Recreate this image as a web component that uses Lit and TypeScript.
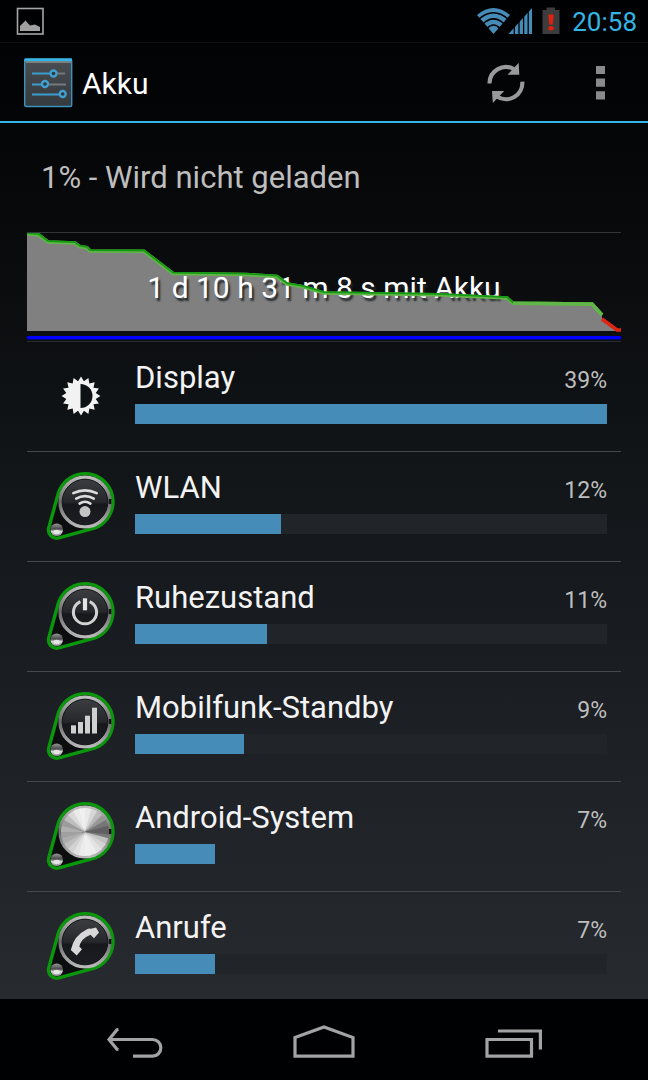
import { LitElement, html, svg, css } from "lit";
import { customElement } from "lit/decorators.js";

interface Consumer {
  name: string;
  percent: number;
  level: number;
  icon: string;
}

const CONSUMERS: Consumer[] = [
  { name: "Display", percent: 39, level: 100, icon: "display" },
  { name: "WLAN", percent: 12, level: 31, icon: "wifi" },
  { name: "Ruhezustand", percent: 11, level: 28, icon: "power" },
  { name: "Mobilfunk-Standby", percent: 9, level: 23, icon: "signal" },
  { name: "Android-System", percent: 7, level: 17, icon: "system" },
  { name: "Anrufe", percent: 7, level: 17, icon: "phone" },
];

const CHARGE =
  "0,2 12,3 21,10 48,11 53,14.7 60,15.7 63,19 117,19.3 146,41.5 219,42.5 250,44.5 260,52 276,54.7 297,61 410,62.7 480,66 486,71.3 565,72 575,83";
const CRITICAL = "575,87 590,98 594,98";

/* Toothed outline of the brightness sun, centred in a 40px box. */
const sunPoints = (): string =>
  Array.from({ length: 32 }, (_, i) => {
    const r = i % 2 ? 15 : 19.4;
    const a = (i * Math.PI) / 16 - Math.PI / 2;
    return `${(20 + r * Math.cos(a)).toFixed(2)},${(20 + r * Math.sin(a)).toFixed(2)}`;
  }).join(" ");

/* Slices of brushed metal: bright above and below, dark at both sides. */
const metalSlices = () =>
  Array.from({ length: 24 }, (_, i) => {
    const a = (i * 15 * Math.PI) / 180;
    const b = ((i * 15 + 21) * Math.PI) / 180;
    const shine = Math.pow(Math.abs(Math.sin(a + 0.28)), 1.3);
    const low = Math.sin(a) > 0 ? 160 : 95;
    const v = Math.round(low + (240 - low) * shine);
    return svg`<path fill="rgb(${v},${v},${v})"
      d="M40 32L${(40 + 24 * Math.cos(a)).toFixed(2)} ${(32 + 24 * Math.sin(a)).toFixed(2)}A24 24 0 0 1 ${(40 + 24 * Math.cos(b)).toFixed(2)} ${(32 + 24 * Math.sin(b)).toFixed(2)}Z"></path>`;
  });

const glyph = (kind: string) => {
  switch (kind) {
    case "wifi":
      return svg`
        <g fill="none" stroke="#dcdcdc" stroke-width="2.6" stroke-linecap="round">
          <path d="M28.3 23.2Q40 17.6 51.7 23.2"></path>
          <path d="M31.2 28.6Q40 23.6 48.8 28.6"></path>
          <path d="M34.6 33.6Q40 30 45.4 33.6"></path>
        </g>
        <circle cx="40" cy="41.6" r="5.5" fill="#c4c4c4"></circle>`;
    case "power":
      return svg`
        <path d="M35.4 21.6A11.6 11.6 0 1 0 44.6 21.6" fill="none" stroke="#d2d2d2" stroke-width="3"></path>
        <path d="M40 18.3V30.3" stroke="#e4e4e4" stroke-width="4.2"></path>`;
    case "signal":
      return svg`
        <g fill="#d0d0d0">
          <rect x="26" y="35.3" width="5" height="8.2"></rect>
          <rect x="33" y="32" width="5" height="11.5"></rect>
          <rect x="40" y="25.7" width="5" height="17.8"></rect>
          <rect x="47" y="17.7" width="5" height="25.8"></rect>
        </g>`;
    case "phone":
      return svg`
        <path fill="#d8d8d8" d="M25.8 40Q28.5 26 42 19.3Q44.5 18 46 18.800L51 17.5L54 22.5L49 28.2L45.5 24.7Q36 28.5 34.3 36.5L37 39.2L31.7 45.5Z"></path>`;
    default:
      return svg`${metalSlices()}`;
  }
};

@customElement("consumer-icon")
class ConsumerIcon extends LitElement {
  static properties = { kind: { type: String } };
  declare kind: string;

  static styles = css`
    :host { display: flex; width: 72px; height: 72px; align-items: center; justify-content: center; }
    svg { display: block; }
  `;

  render() {
    if (this.kind === "display") {
      return html`
        <svg width="40" height="40" viewBox="0 0 40 40" aria-hidden="true">
          <polygon points=${sunPoints()} fill="#f2f2f2"></polygon>
          <path d="M19.5 8A12 12 0 0 1 19.5 32Z" fill="#0e1113"></path>
        </svg>`;
    }
    return html`
      <svg width="72" height="72" viewBox="0 0 72 72" aria-hidden="true">
        <defs>
          <linearGradient id="ring" x1="0" y1="0" x2="0" y2="1">
            <stop offset="0" stop-color="#bcbcbc"></stop>
            <stop offset="0.5" stop-color="#6a6a6c"></stop>
            <stop offset="1" stop-color="#b8b8b8"></stop>
          </linearGradient>
          <linearGradient id="face" x1="0" y1="0" x2="0" y2="1">
            <stop offset="0" stop-color="#3c3d40"></stop>
            <stop offset="0.5" stop-color="#26272b"></stop>
            <stop offset="0.55" stop-color="#17181c"></stop>
            <stop offset="1" stop-color="#1c1e23"></stop>
          </linearGradient>
          <linearGradient id="knob" x1="0" y1="0" x2="0" y2="1">
            <stop offset="0" stop-color="#999999"></stop>
            <stop offset="0.45" stop-color="#47484a"></stop>
            <stop offset="0.65" stop-color="#d8d8d8"></stop>
            <stop offset="1" stop-color="#8a8a8a"></stop>
          </linearGradient>
        </defs>
        <path d="M13 24.3A28 28 0 1 1 47.4 58.7L13.9 67.9A8.2 8.2 0 0 1 3.8 57.8Z"
          fill="#0b0d0f" stroke="#0a970c" stroke-width="3.4"></path>
        <circle cx="40" cy="32" r="24.6" fill="none" stroke="url(#ring)" stroke-width="4"></circle>
        <circle cx="40" cy="32" r="22.8" fill="url(#face)" stroke="#151618" stroke-width="1"></circle>
        <path d="M65 29V34" stroke="#111214" stroke-width="2.5"></path>
        <circle cx="11.7" cy="59.7" r="6.3" fill="url(#knob)"></circle>
        <ellipse cx="11.7" cy="62" rx="3.2" ry="2.2" fill="#e4e4e4"></ellipse>
        ${glyph(this.kind)}
      </svg>`;
  }
}

@customElement("app-root")
class AppRoot extends LitElement {
  static styles = css`
    :host {
      display: flex;
      flex-direction: column;
      height: 100vh;
      overflow: hidden;
      font-family: Roboto, "Noto Sans", sans-serif;
      font-size: 30px;
      line-height: 36px;
      color: #f3f3f3;
      background: linear-gradient(#000203 0, #030506 120px, #0b0d0f 300px, #13171a 500px, #1c1f24 720px, #272a2f 1000px);
    }
    * { box-sizing: border-box; }
    svg { display: block; }
    button { display: flex; align-items: center; justify-content: center; padding: 0; border: 0; background: none; cursor: pointer; }
    .status { display: flex; flex: none; align-items: center; gap: 10px; height: 42px; padding: 0 11px 0 16px; background: #000102; }
    .clock { margin-top: 2px; font-size: 26px; line-height: 32px; color: #33b5e5; }
    .network { display: flex; margin-left: auto; }
    .battery { margin-right: 2px; }
    .actionbar { display: flex; flex: none; align-items: center; height: 81px; padding: 2px 17px 0 23px; border-top: 1px solid #0c0e0f; border-bottom: 2px solid #33b5e5; }
    .title { margin: 2px auto 0 9px; font-size: 30px; font-weight: 400; color: #ffffff; }
    .refresh { width: 64px; height: 64px; }
    .more { width: 64px; height: 64px; margin-left: 30px; margin-right: -1px; }
    .content { flex: 1; min-height: 0; overflow: hidden; padding: 0 27px; }
    .state { margin: 0; padding: 37px 14px 36px; font-size: 31px; font-weight: 400; color: #bebebe; }
    .chart { display: grid; height: 110px; border-top: 1px solid #333638; border-bottom: 1px solid #2b2e30; }
    .layer { grid-area: 1 / 1; width: 100%; height: 108px; }
    .duration { grid-area: 1 / 1; margin: 0; padding-top: 37px; text-align: center; text-shadow: 2px 3px 2px #22262a; color: #ffffff; }
    .list { margin: 0; padding: 0; list-style: none; }
    .row { display: flex; height: 110px; padding: 18px 14px 0 18px; border-bottom: 1px solid #46494c; }
    .row:last-child { border-bottom: 0; }
    .info { flex: 1; margin-left: 18px; }
    .label { display: flex; align-items: baseline; justify-content: space-between; height: 44px; }
    .name { font-size: 31px; }
    .percent { font-size: 23px; color: #bebebe; }
    .track { height: 20px; background: #212428; }
    .fill { height: 100%; background: #468cb8; }
    .nav { display: flex; flex: none; height: 81px; padding: 4px 40px 0; background: #000102; }
    .key { flex: 1; }
  `;

  render() {
    return html`
      <div class="status">
        <svg width="28" height="28" viewBox="0 0 28 28" aria-hidden="true">
          <rect x="1.5" y="1.5" width="25.5" height="25.5" fill="none" stroke="#a6a6a6" stroke-width="1.6"></rect>
          <path d="M4 24V19L6 17L9.5 13.5L14 18.5L19 17.5L24 20V24Z" fill="#a0a0a0"></path>
        </svg>
        <svg class="network" width="56" height="28" viewBox="0 0 56 28" role="img" aria-label="WLAN und Mobilfunk">
          <path d="M17.5 27L1 8Q17.5 -6 34 8Z" fill="#468cb8"></path>
          <g fill="none" stroke="#000102" stroke-width="1.6">
            <path d="M3 12Q17.500 -0.500 32 12"></path>
            <path d="M7 16.8Q17.5 7 28 16.8"></path>
            <path d="M11 21.500Q17.500 14.500 24 21.500"></path>
          </g>
          <path d="M32.500 27L56 1V27Z" fill="#468cb8"></path>
          <path d="M38.300 5V28M43 1V28M47.600 1V28M52.200 1V28" stroke="#000102" stroke-width="1.3"></path>
        </svg>
        <svg class="battery" width="18" height="28" viewBox="0 0 18 28" role="img" aria-label="Akku leer">
          <path d="M0.5 3H4.5V0.5H13V3H17.5V27H0.5Z" fill="#3c3c3c"></path>
          <path d="M6.3 7.5H11.7L10.7 17.5H7.3Z" fill="#e3200f"></path>
          <ellipse cx="9" cy="21.3" rx="2.7" ry="2.2" fill="#e3200f"></ellipse>
        </svg>
        <span class="clock">20:58</span>
      </div>

      <header class="actionbar">
        <svg width="50" height="50" viewBox="0 0 50 50" aria-hidden="true">
          <defs>
            <linearGradient id="tile" x1="0" y1="0" x2="0" y2="1">
              <stop offset="0" stop-color="#4a4e52"></stop>
              <stop offset="1" stop-color="#353a3e"></stop>
            </linearGradient>
          </defs>
          <rect x="1.7" y="1" width="47" height="47.5" rx="1.5" fill="url(#tile)" stroke="#3d92bd" stroke-width="1.4"></rect>
          <path d="M1.5 1.8H49" stroke="#33b5e5" stroke-width="2.8"></path>
          <path d="M3 4H48" stroke="#8d8f91" stroke-width="1.4"></path>
          <g stroke-width="1.8">
            <path d="M34 15.5H42M26 26.5H43" stroke="#75797c"></path>
            <path d="M9 15.5H27M9 26.5H19M9 36.5H36" stroke="#3b9bcb"></path>
          </g>
          <g fill="#30363b" stroke="#419fd0" stroke-width="2.4">
            <circle cx="30.5" cy="15.5" r="3"></circle>
            <circle cx="22" cy="26" r="3"></circle>
            <circle cx="39.7" cy="36" r="3"></circle>
          </g>
        </svg>
        <h1 class="title">Akku</h1>
        <button class="refresh" aria-label="Aktualisieren">
          <svg width="40" height="42" viewBox="0 0 40 42" aria-hidden="true">
            <g fill="none" stroke="#999999" stroke-width="4.2">
              <path d="M3.5 21.5A16.3 16.3 0 0 1 28.5 7.5"></path>
              <path d="M36.3 19.7A16.3 16.3 0 0 1 11 34.5"></path>
            </g>
            <path d="M32.7 0.7L33.3 12.7H21.5Z" fill="#999999"></path>
            <path d="M6.8 40.9L6 29H18.2Z" fill="#999999"></path>
          </svg>
        </button>
        <button class="more" aria-label="Weitere Optionen">
          <svg width="9" height="34" viewBox="0 0 9 34" aria-hidden="true">
            <path d="M0 0H9V8H0ZM0 12.5H9V20.8H0ZM0 25.3H9V33.5H0Z" fill="#8a8a8a"></path>
          </svg>
        </button>
      </header>

      <main class="content">
        <h2 class="state">1% - Wird nicht geladen</h2>
        <section class="chart" aria-label="Akkuverlauf">
          <svg class="layer" viewBox="0 1 594 108" preserveAspectRatio="none" aria-hidden="true">
            <polygon points="${CHARGE} ${CRITICAL} 594,99 0,99" fill="#808080"></polygon>
            <rect x="0" y="104" width="594" height="3.4" fill="#0000ff"></rect>
          </svg>
          <p class="duration">1 d 10 h 31 m 8 s mit Akku</p>
          <svg class="layer" viewBox="0 1 594 108" preserveAspectRatio="none" aria-hidden="true">
            <polyline points=${CHARGE} fill="none" stroke="#62b548" stroke-width="3.6"></polyline>
            <polyline points=${CHARGE} fill="none" stroke="#149a12" stroke-width="1.8" transform="translate(0 -0.8)"></polyline>
            <polyline points="486,71.3 565,72 575,83" fill="none" stroke="#62b548" stroke-width="3.6"></polyline>
            <polyline points=${CRITICAL} fill="none" stroke="#e02412" stroke-width="3.6"></polyline>
          </svg>
        </section>
        <ul class="list">
          ${CONSUMERS.map(
            (c) => html`
              <li class="row">
                <consumer-icon kind=${c.icon}></consumer-icon>
                <div class="info">
                  <div class="label">
                    <span class="name">${c.name}</span>
                    <span class="percent">${c.percent}%</span>
                  </div>
                  <div class="track" role="meter" aria-label=${c.name} aria-valuemin="0" aria-valuemax="100" aria-valuenow=${c.percent}>
                    <div class="fill" style="width:${c.level}%"></div>
                  </div>
                </div>
              </li>`
          )}
        </ul>
      </main>

      <nav class="nav">
        <button class="key" aria-label="Zurück">
          <svg width="58" height="34" viewBox="0 0 58 34" fill="none" stroke="#a3a3a3" stroke-width="3.2" aria-hidden="true">
            <path d="M3 14.5H46.500A8.3 8.3 0 0 1 46.500 31.2H27"></path>
            <path d="M12.500 4.500L11 4.800L3 14.5L11 24.200L12.500 24.500"></path>
          </svg>
        </button>
        <button class="key" aria-label="Startseite">
          <svg width="62" height="34" viewBox="0 0 62 34" fill="none" stroke="#a3a3a3" stroke-width="3.2" aria-hidden="true">
            <path d="M2 12.5L31 2L60 12.5V31.2H2Z"></path>
          </svg>
        </button>
        <button class="key" aria-label="Letzte Apps">
          <svg width="58" height="34" viewBox="0 0 58 34" fill="none" stroke="#a3a3a3" stroke-width="3.2" aria-hidden="true">
            <path d="M3 14.5H47.5V31.2H3Z"></path>
            <path d="M15 6H57.400V24.5" transform="translate(-1 0)"></path>
          </svg>
        </button>
      </nav>
    `;
  }
}
